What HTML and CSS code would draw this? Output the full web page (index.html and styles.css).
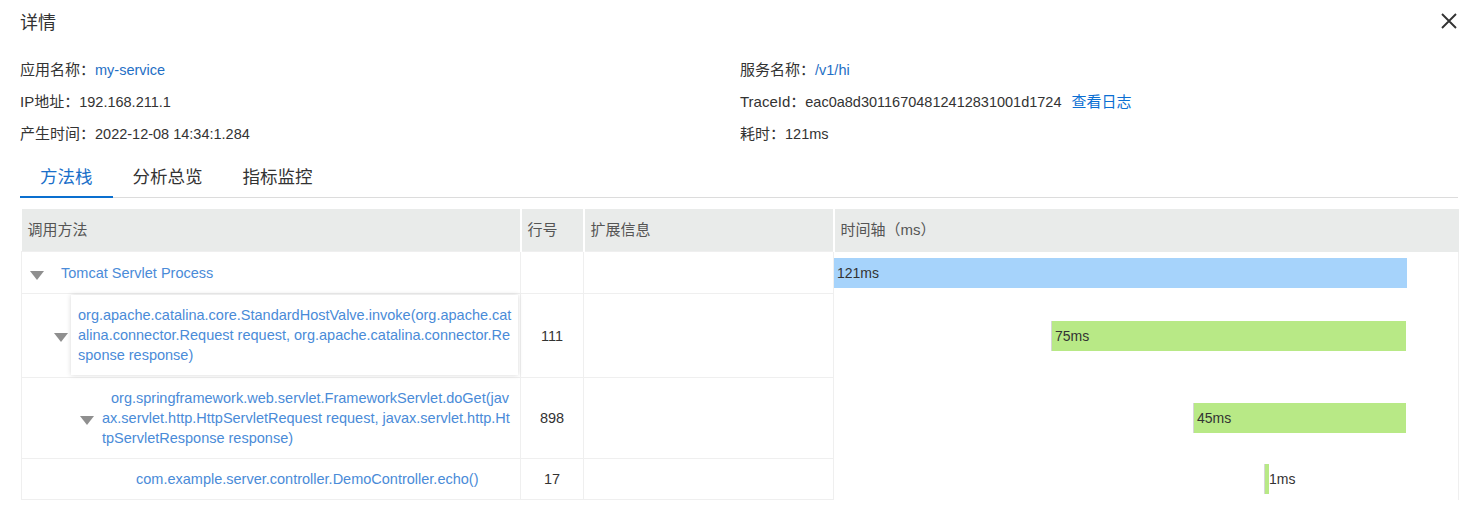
FILE: index.html
```html
<!DOCTYPE html>
<html lang="zh-CN">
<head>
<meta charset="utf-8">
<title>详情</title>
<link rel="stylesheet" href="styles.css">
</head>
<body>
<div class="drawer">
  <div class="head">
    <div class="title">详情</div>
    <svg class="close" width="18" height="18" viewBox="0 0 18 18"><path d="M2 2 L16 16 M16 2 L2 16" stroke="#333" stroke-width="1.9" fill="none"/></svg>
  </div>

  <div class="info">
    <div class="item"><span class="label">应用名称：</span><span class="link">my-service</span></div>
    <div class="item"><span class="label">服务名称：</span><span class="link">/v1/hi</span></div>
    <div class="item"><span class="label">IP地址：</span><span class="val">192.168.211.1</span></div>
    <div class="item"><span class="label">TraceId：</span><span class="val">eac0a8d30116704812412831001d1724</span><span class="label link log">查看日志</span></div>
    <div class="item"><span class="label">产生时间：</span><span class="val">2022-12-08 14:34:1.284</span></div>
    <div class="item"><span class="label">耗时：</span><span class="val">121ms</span></div>
  </div>

  <div class="tabs">
    <div class="tab active">方法栈</div>
    <div class="tab">分析总览</div>
    <div class="tab">指标监控</div>
  </div>

  <table class="stack">
    <colgroup>
      <col class="c-method">
      <col class="c-line">
      <col class="c-ext">
      <col class="c-time">
    </colgroup>
    <thead>
      <tr>
        <th>调用方法</th>
        <th>行号</th>
        <th>扩展信息</th>
        <th>时间轴（ms）</th>
      </tr>
    </thead>
    <tbody>
      <tr>
        <td class="method lvl0"><div class="m"><span class="tri"></span><span class="mtext">Tomcat Servlet Process</span></div></td>
        <td class="num"></td>
        <td></td>
        <td class="time"><div class="bar blue" style="margin-left:0px;width:573px">121ms</div></td>
      </tr>
      <tr>
        <td class="method lvl1"><div class="m"><span class="tri"></span><div class="mtext card">org.apache.catalina.core.StandardHostValve.invoke(org.apache.catalina.connector.Request request, org.apache.catalina.connector.Response response)</div></div></td>
        <td class="num">111</td>
        <td></td>
        <td class="time"><div class="bar green" style="margin-left:217px;width:355px">75ms</div></td>
      </tr>
      <tr>
        <td class="method lvl2"><div class="m"><span class="tri"></span><div class="mtext wrap indent">org.springframework.web.servlet.FrameworkServlet.doGet(javax.servlet.http.HttpServletRequest request, javax.servlet.http.HttpServletResponse response)</div></div></td>
        <td class="num">898</td>
        <td></td>
        <td class="time"><div class="bar green" style="margin-left:359px;width:213px">45ms</div></td>
      </tr>
      <tr>
        <td class="method lvl3"><div class="m"><span class="mtext">com.example.server.controller.DemoController.echo()</span></div></td>
        <td class="num">17</td>
        <td></td>
        <td class="time last"><div class="bar green" style="margin-left:430px;width:5px"><span class="out">1ms</span></div></td>
      </tr>
    </tbody>
  </table>
</div>
</body>
</html>
```

FILE: styles.css
```css
html, body {
  margin: 0;
  padding: 0;
  background: #fff;
}

body {
  font-family: "Liberation Sans", "Noto Sans CJK SC", sans-serif;
  font-size: 14px;
  color: #333;
}

.drawer {
  padding: 0 10px 0 20px;
}

.head {
  height: 42px;
  display: flex;
  align-items: center;
  justify-content: space-between;
}

.title {
  font-size: 18px;
  color: #333;
}

.close {
  display: block;
  margin-top: -1px;
}

.info {
  margin-top: 12px;
  display: grid;
  grid-template-columns: 720px 1fr;
  grid-auto-rows: 32px;
}

.item {
  display: flex;
  align-items: baseline;
  padding-top: 4px;
  white-space: nowrap;
}

.label {
  font-size: 15px;
}

.val {
  font-size: 14.5px;
}

.link {
  font-size: 14.5px;
  color: #1f6fc5;
}

.log {
  margin-left: 10px;
  font-size: 15px;
  color: #0b6fd3;
}

.tabs {
  margin-top: 8px;
  display: flex;
  border-bottom: 1px solid #dcdcdc;
}

.tab {
  padding: 0 20px;
  height: 38px;
  line-height: 38px;
  font-size: 17.5px;
  color: #333;
  border-bottom: 2px solid transparent;
  margin-bottom: -1px;
}

.tab.active {
  color: #1a6fc9;
  border-bottom-color: #0a6fcf;
}

.stack {
  margin: 11px 0 0 1px;
  width: 1437px;
  table-layout: fixed;
  border-collapse: collapse;
  font-size: 14.5px;
  line-height: 20px;
}

.c-method { width: 499px; }
.c-line { width: 63px; }
.c-ext { width: 250px; }
.c-time { width: 625px; }

.stack th {
  height: 42px;
  padding: 0 6px;
  background: #e9ebea;
  border-right: 2px solid #fff;
  text-align: left;
  font-weight: normal;
  font-size: 15px;
  color: #555;
}

.stack th:last-child {
  border-right: none;
}

.stack td {
  border: 1px solid #efefef;
  padding: 10px 6px;
  vertical-align: middle;
  color: #333;
}

.stack td.num {
  text-align: center;
}

.stack td.method {
  padding-right: 0;
}

.m {
  display: flex;
  align-items: center;
}

.tri {
  flex: none;
  width: 0;
  height: 0;
  border-left: 7px solid transparent;
  border-right: 7px solid transparent;
  border-top: 9px solid #8f8f8f;
  margin-top: 4px;
}

.mtext {
  color: #4a8bd8;
}

.lvl0 .m { padding-left: 2px; padding-top: 1px; }
.lvl0 .tri { margin-right: 17px; }

.stack td.lvl1 {
  padding: 1px 2px 2px 32px;
}
.lvl1 .tri { margin-right: 3px; }

.card {
  width: 437px;
  padding: 10px 4px 10px 7px;
  background: #fff;
  box-shadow: 0 0 5px rgba(0, 0, 0, 0.16);
  word-break: break-all;
}

.stack td.lvl2 {
  padding-left: 58px;
}
.lvl2 .tri { margin-right: 8px; }

.wrap {
  width: 410px;
  word-break: break-all;
}

.indent {
  text-indent: 9px;
}

.stack td.lvl3 {
  padding-left: 114px;
}

.stack td.time {
  padding: 0;
  border-top: none;
  border-bottom: none;
}

.bar {
  height: 30px;
  line-height: 30px;
  font-size: 14px;
  color: #333;
  padding-left: 3px;
  box-sizing: border-box;
  white-space: nowrap;
}

.bar.blue {
  background: #a6d3fb;
}

.bar.green {
  background: #b8e986;
  border-left: 1px solid #d6d6d6;
}

.out {
  margin-left: 1px;
}
```
